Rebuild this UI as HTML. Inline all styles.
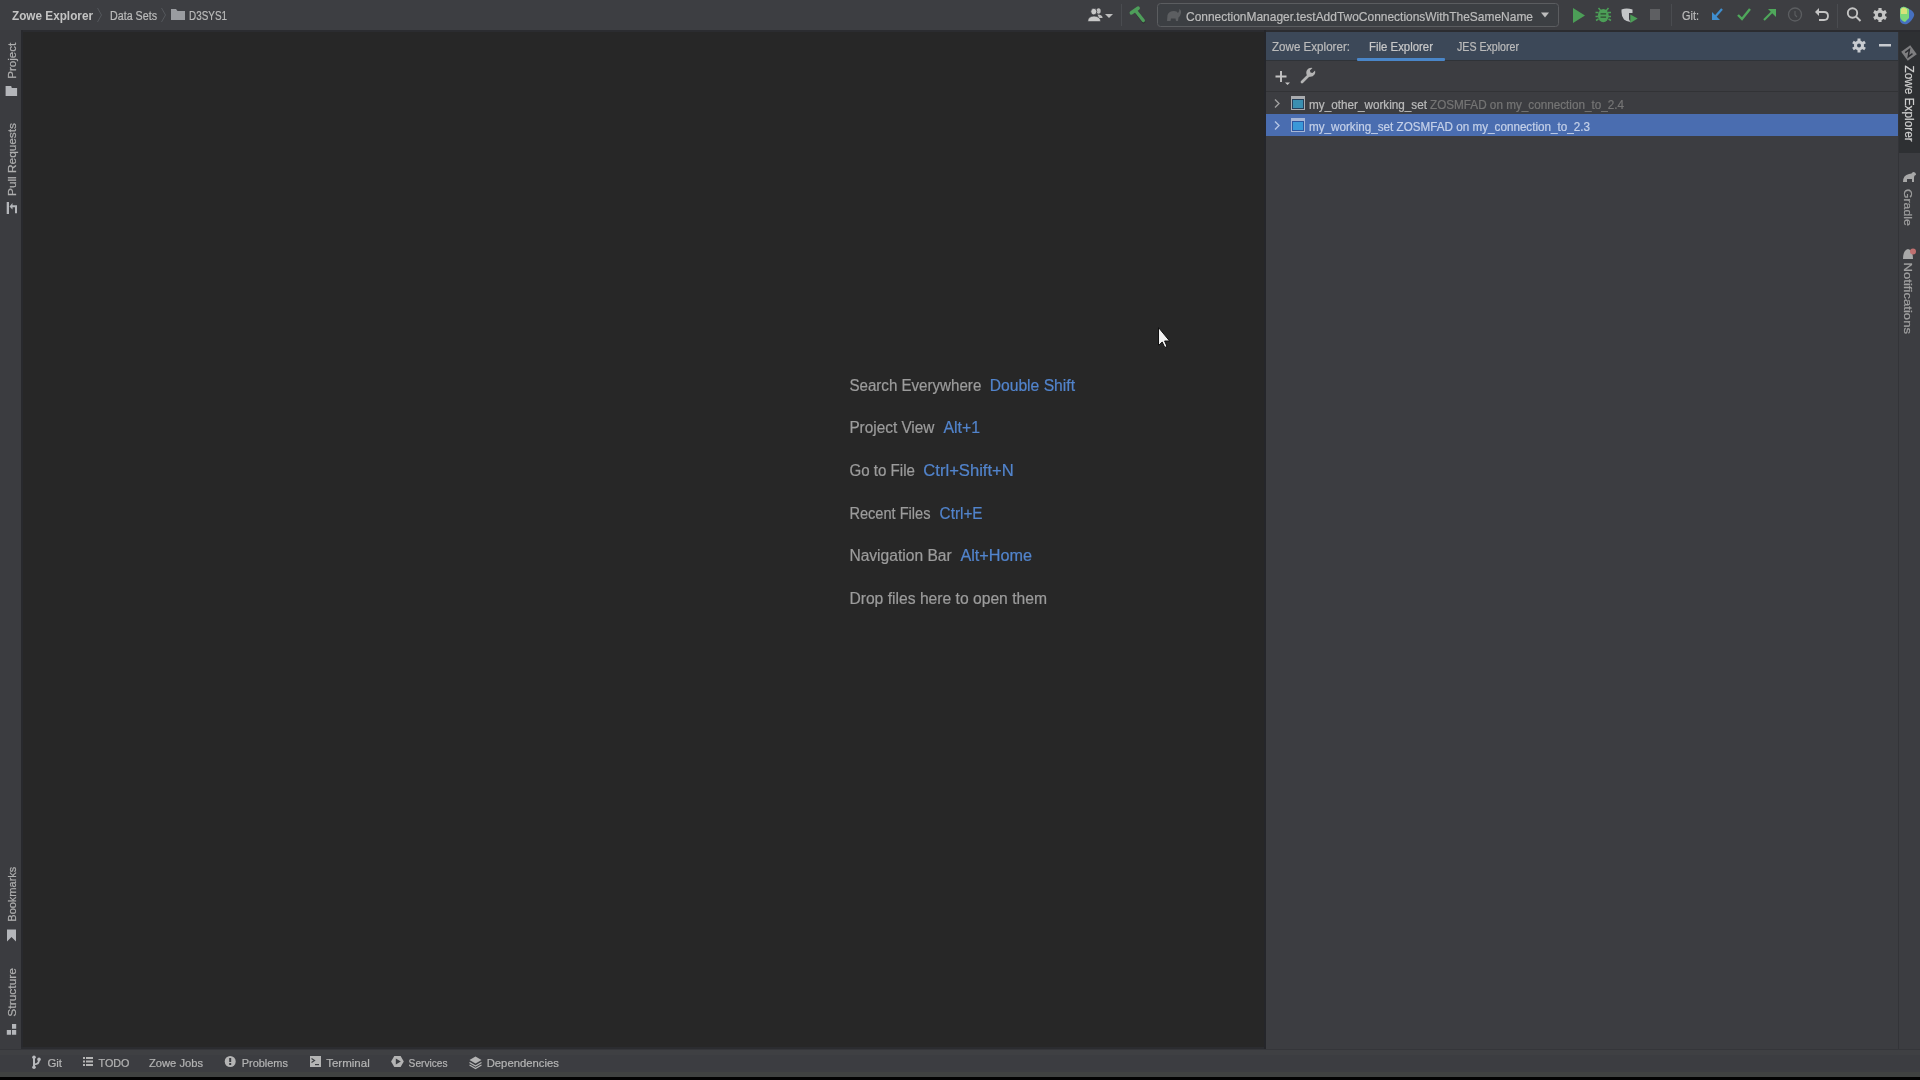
<!DOCTYPE html>
<html><head><meta charset="utf-8">
<style>
*{margin:0;padding:0;box-sizing:border-box}
html,body{width:1920px;height:1080px;overflow:hidden;background:#000;font-family:"Liberation Sans",sans-serif;color:#bbbbbb}
.abs{position:absolute}
#top{left:0;top:0;width:1920px;height:30px;background:#3d3e42}
#topline{left:21px;top:30px;width:1899px;height:2px;background:#2b2c30}
#lstripe{left:0;top:30px;width:21px;height:1019px;background:#3b3c40}
#lborder{left:21px;top:30px;width:2px;height:1019px;background:#28292d}
#editor{left:23px;top:32px;width:1241px;height:1015px;background:#272727}
#edbottom{left:21px;top:1047px;width:1245px;height:2px;background:#2b2c30}
#edborder{left:1264px;top:30px;width:2px;height:1019px;background:#25262a}
#panel{left:1266px;top:32px;width:632px;height:1017px;background:#3c3d41}
#rstripe{left:1898px;top:30px;width:22px;height:1019px;background:#3c3d41;border-left:1px solid #333438}
#status{left:0;top:1049px;width:1920px;height:28px;background:#3c3d41;border-top:1px solid #35363a}
#status2{left:0;top:1050px;width:1920px;height:5px;background:#3f4043}
#status3{left:0;top:1072px;width:1920px;height:5px;background:#404241}
#bottomblack{left:0;top:1077px;width:1920px;height:3px;background:#030303}
svg{position:absolute;left:0;top:0;will-change:transform}
text{font-family:"Liberation Sans",sans-serif}
</style></head><body>
<div id="top" class="abs"></div>
<div id="lstripe" class="abs"></div>
<div id="editor" class="abs"></div>
<div id="panel" class="abs"></div>
<div id="rstripe" class="abs"></div>
<div id="topline" class="abs"></div>
<div id="lborder" class="abs"></div>
<div id="edbottom" class="abs"></div>
<div id="edborder" class="abs"></div>
<div id="status" class="abs"></div>
<div id="status2" class="abs"></div>
<div id="status3" class="abs"></div>
<div id="bottomblack" class="abs"></div>

<svg width="1920" height="1080" viewBox="0 0 1920 1080">
<!-- ===== TOP BAR ===== -->
<g fill="#bbbbbb" font-size="12.5">
  <text x="12" y="20" font-weight="bold" textLength="81" lengthAdjust="spacingAndGlyphs" fill="#c4c4c4">Zowe Explorer</text>
  <text x="110" y="20" textLength="47" lengthAdjust="spacingAndGlyphs" stroke="#bbbbbb" stroke-width="0.22">Data Sets</text>
  <text x="189" y="20" textLength="38" lengthAdjust="spacingAndGlyphs" stroke="#bbbbbb" stroke-width="0.22">D3SYS1</text>
</g>
<g stroke="#55585c" stroke-width="1" fill="none">
  <path d="M97.5 8 L101.5 15 L97.5 22"/>
  <path d="M161.5 8 L165.5 15 L161.5 22"/>
</g>
<path d="M171 9 h5 l1.5 2 h7.5 v9 h-14 z" fill="#9a9ca0"/>

<!-- right toolbar -->
<g fill="#bdbdbd">
  <!-- user icon -->
  <ellipse cx="1098.6" cy="11" rx="2.1" ry="2.8" fill="#bdbdbd"/>
  <path d="M1097.5 14.6 Q1102.6 14.8 1102.6 18 L1099 18 z" fill="#bdbdbd"/>
  <ellipse cx="1093.8" cy="11.6" rx="3" ry="3.3" fill="#c8c8c8" stroke="#3d3e42" stroke-width="0.8"/>
  <path d="M1087.8 21.6 Q1087.8 16.4 1094 16.1 Q1100.6 16.4 1100.6 21.6z" fill="#c8c8c8" stroke="#3d3e42" stroke-width="0.6"/>
  <path d="M1105 14 h8 l-4 4 z"/>
</g>
<rect x="1121" y="4" width="1" height="22" fill="#4a4c50"/>
<!-- hammer -->
<path d="M1137 13.5 L1144.5 23" stroke="#2a2b2d" stroke-width="3" opacity="0.6"/>
<path d="M1131.5 12.8 L1138 8.2" stroke="#4e9e5a" stroke-width="3.8" stroke-linecap="round"/>
<path d="M1135.8 11 L1143.3 20.6" stroke="#4e9e5a" stroke-width="3.3" stroke-linecap="round"/>
<!-- combo -->
<rect x="1157.5" y="3.5" width="401" height="23" rx="3" fill="#3c3f43" stroke="#5b5d60"/>
<path d="M1167 21 L1167.5 15 Q1169 11 1174 11 Q1177 11 1178 13 Q1179.8 11.5 1179.2 9 Q1181.5 10 1181 13 Q1180.5 16 1178.5 17.5 L1178 21 L1176 21 L1175.5 18.5 L1171 18.5 L1170.5 21 Z" fill="#5c5e61"/>
<text x="1186" y="20.5" font-size="12.9" fill="#bcbcbc" textLength="347" lengthAdjust="spacingAndGlyphs" stroke="#bcbcbc" stroke-width="0.22">ConnectionManager.testAddTwoConnectionsWithTheSameName</text>
<path d="M1541 12.5 h8 l-4 5 z" fill="#bdbdbd"/>
<!-- run -->
<path d="M1573 8 L1585 15.5 L1573 23 z" fill="#4c9e57"/>
<!-- debug -->
<g stroke="#4c9e57" stroke-width="1.5" fill="none">
  <path d="M1598.5 8 l2.5 3 M1608.5 8 l-2.5 3 M1595.5 12.5 h3 M1608 12.5 h3 M1595.5 16.5 h3 M1608 16.5 h3 M1596 20.5 l2.5-1.5 M1611 20.5 l-2.5-1.5"/>
</g>
<ellipse cx="1603.3" cy="15.6" rx="5.4" ry="6.6" fill="#4c9e57"/>
<path d="M1600.5 13.8 h5.6 M1600.5 17.2 h5.6" stroke="#2e4a33" stroke-width="1.3"/>
<!-- coverage -->
<path d="M1621.5 9.5 Q1626.5 7.6 1632.5 9.5 L1632.5 13 L1629 13 L1629 19.2 Q1629.4 21 1631 21.6 Q1627 22.2 1624 19.6 Q1621.5 16.8 1621.5 12 Z" fill="#c4c6c8"/>
<path d="M1630.3 14.5 L1637.7 18.6 L1630.3 23 Z" fill="#4c9e57"/>
<!-- stop -->
<rect x="1650" y="9" width="10" height="11" fill="#5e5f62"/>
<rect x="1671" y="4" width="1" height="22" fill="#4a4c50"/>
<text x="1682" y="20" font-size="12" fill="#bbbbbb" textLength="17" lengthAdjust="spacingAndGlyphs" stroke="#bbbbbb" stroke-width="0.22">Git:</text>
<!-- update arrow (blue, down-left) -->
<g stroke="#3f8ed0" stroke-width="2.2" fill="none">
  <path d="M1722 9 L1714 18"/>
</g>
<path d="M1712 12 v8 h8 z" fill="#3f8ed0"/>
<!-- commit check -->
<path d="M1738 15 l4 4 l8-10" stroke="#4fa85b" stroke-width="2.4" fill="none"/>
<!-- push arrow -->
<path d="M1764 20 L1774 10" stroke="#4fa85b" stroke-width="2.2" fill="none"/>
<path d="M1768 9 h8 v8 z" fill="#4fa85b"/>
<!-- history -->
<circle cx="1795" cy="14.5" r="6.5" stroke="#5c5e61" stroke-width="1.3" fill="none"/>
<path d="M1795 11 v4 l2 2" stroke="#5c5e61" stroke-width="1.1" fill="none"/>
<!-- rollback -->
<path d="M1818 12 h6 q4 0 4 4 q0 4-4 4 h-5" stroke="#c4c4c4" stroke-width="1.8" fill="none"/>
<path d="M1815 12 l4-4 v8 z" fill="#c4c4c4"/>
<rect x="1837" y="4" width="1" height="24" fill="#4a4c50"/>
<!-- search -->
<circle cx="1852.5" cy="13" r="4.7" stroke="#c4c4c4" stroke-width="1.9" fill="none"/>
<path d="M1856 16.5 L1860.5 21" stroke="#c4c4c4" stroke-width="2" fill="none"/>
<!-- gear -->
<g transform="translate(1880,15)">
  <circle r="5.2" fill="#c4c4c4"/>
  <g fill="#c4c4c4">
    <rect x="-1.6" y="-7" width="3.2" height="14"/>
    <rect x="-1.6" y="-7" width="3.2" height="14" transform="rotate(60)"/>
    <rect x="-1.6" y="-7" width="3.2" height="14" transform="rotate(120)"/>
  </g>
  <circle r="2.2" fill="#3c3f43"/>
</g>
<!-- toolbox -->
<path d="M1900 9 q2-3 5-2 l6 3 q4 3 3 6 q-2 5-7 8 q-5 1-7-3 z" fill="#4670c0"/>
<path d="M1900 9 q2-3 5-2 l4 2 v9 l-4 4 q-5-2-5-6 z" fill="#7fd87a"/>
<path d="M1901 9 q2-2 4-1 l2 1 v5 h-6 z" fill="#d7e27a"/>

<!-- ===== LEFT STRIPE ===== -->
<g fill="#afafaf" font-size="11.5">
  <text transform="translate(15.6,78.7) rotate(-90)" textLength="36" lengthAdjust="spacingAndGlyphs" stroke="#afafaf" stroke-width="0.22">Project</text>
  <text transform="translate(15.6,196) rotate(-90)" textLength="73" lengthAdjust="spacingAndGlyphs" stroke="#afafaf" stroke-width="0.22">Pull Requests</text>
  <text transform="translate(15.6,921.7) rotate(-90)" textLength="55" lengthAdjust="spacingAndGlyphs" stroke="#afafaf" stroke-width="0.22">Bookmarks</text>
  <text transform="translate(15.6,1016.7) rotate(-90)" textLength="48.7" lengthAdjust="spacingAndGlyphs" stroke="#afafaf" stroke-width="0.22">Structure</text>
</g>
<g fill="#b4b6ba">
  <path d="M5.6 86 h5.6 l0.6 2 h5.3 v8 h-11.5 z"/>
  <path d="M6.7 202 h2.3 v12 h-2.3z M9.5 206.5 l3-3.5 v2.3 h4.5 v8 h-2 v-6 h-2.5 v2.3z"/>
  <path d="M7 929.5 h9 v12 l-4.5-4.5 l-4.5 4.5 z"/>
  <path d="M12 1024 h4.2 v4.8 h-4.2z M12 1030 h4.2 v4.8 h-4.2z M6.8 1030 h4.3 v4.8 h-4.3z"/>
</g>

<!-- ===== WELCOME ===== -->
<g font-size="16" fill="#9c9c9c">
  <text x="849.4" y="390.8" textLength="131.9" lengthAdjust="spacingAndGlyphs" stroke="#9c9c9c" stroke-width="0.22">Search Everywhere</text>
  <text x="849.4" y="433.2" textLength="85" lengthAdjust="spacingAndGlyphs" stroke="#9c9c9c" stroke-width="0.22">Project View</text>
  <text x="849.4" y="475.8" textLength="65.5" lengthAdjust="spacingAndGlyphs" stroke="#9c9c9c" stroke-width="0.22">Go to File</text>
  <text x="849.4" y="518.5" textLength="81.1" lengthAdjust="spacingAndGlyphs" stroke="#9c9c9c" stroke-width="0.22">Recent Files</text>
  <text x="849.4" y="560.8" textLength="102.3" lengthAdjust="spacingAndGlyphs" stroke="#9c9c9c" stroke-width="0.22">Navigation Bar</text>
  <text x="849.4" y="603.5" textLength="197.6" lengthAdjust="spacingAndGlyphs" stroke="#9c9c9c" stroke-width="0.22">Drop files here to open them</text>
</g>
<g font-size="16" fill="#5284cc">
  <text x="989.7" y="390.8" textLength="85.3" lengthAdjust="spacingAndGlyphs" stroke="#5284cc" stroke-width="0.22">Double Shift</text>
  <text x="943.5" y="433.2" textLength="36.5" lengthAdjust="spacingAndGlyphs" stroke="#5284cc" stroke-width="0.22">Alt+1</text>
  <text x="923.3" y="475.8" textLength="90.5" lengthAdjust="spacingAndGlyphs" stroke="#5284cc" stroke-width="0.22">Ctrl+Shift+N</text>
  <text x="939.6" y="518.5" textLength="43" lengthAdjust="spacingAndGlyphs" stroke="#5284cc" stroke-width="0.22">Ctrl+E</text>
  <text x="960.4" y="560.8" textLength="71.6" lengthAdjust="spacingAndGlyphs" stroke="#5284cc" stroke-width="0.22">Alt+Home</text>
</g>
<!-- cursor -->
<path d="M1158.5 327.5 L1158.5 345.5 L1162.2 342 L1164.8 347.5 L1167 346.5 L1164.6 341 L1169.6 341 Z" fill="#f2f2f2" stroke="#111" stroke-width="1"/>

<!-- ===== TOOL WINDOW ===== -->
<rect x="1266" y="32" width="632" height="28" fill="#3c4858"/>
<rect x="1266" y="60" width="632" height="1" fill="#2f3338"/>
<g font-size="12.3" fill="#bbbbbb">
  <text x="1272" y="51" textLength="78" lengthAdjust="spacingAndGlyphs" stroke="#bbbbbb" stroke-width="0.22">Zowe Explorer:</text>
  <text x="1369" y="51" textLength="64" lengthAdjust="spacingAndGlyphs" fill="#c8c8c8" stroke="#c8c8c8" stroke-width="0.22">File Explorer</text>
  <text x="1457" y="51" textLength="62" lengthAdjust="spacingAndGlyphs" stroke="#bbbbbb" stroke-width="0.22">JES Explorer</text>
</g>
<rect x="1357" y="58" width="88" height="3" rx="1" fill="#4a86c8"/>
<!-- header gear -->
<g transform="translate(1859,45.5)">
  <circle r="5" fill="#c8cbd0"/>
  <g fill="#c8cbd0">
    <rect x="-1.5" y="-7" width="3" height="14"/>
    <rect x="-1.5" y="-7" width="3" height="14" transform="rotate(60)"/>
    <rect x="-1.5" y="-7" width="3" height="14" transform="rotate(120)"/>
  </g>
  <circle r="2" fill="#3b4858"/>
</g>
<rect x="1879" y="44" width="12" height="2.5" fill="#c8cbd0"/>
<!-- toolbar -->
<rect x="1266" y="91" width="632" height="1" fill="#323336"/>
<path d="M1281 71 v11 M1275.5 76.5 h11" stroke="#c4c4c4" stroke-width="1.9"/>
<path d="M1285 82.5 h5 l-2.5 2.5z" fill="#c4c4c4"/>
<path d="M1302 82 L1309 75" stroke="#b4b4b4" stroke-width="2.8" stroke-linecap="round"/><path d="M1306.5 74.5 q-1-4 2-6 q2-1 4-0.6 l-2.6 2.6 l0.6 2 l2 0.6 l2.6-2.6 q0.5 2-0.6 4 q-2 3-6 2z" fill="#b4b4b4"/>
<!-- rows -->
<rect x="1266" y="114" width="632" height="22" fill="#4a6db0"/>
<g stroke="#a0a0a0" stroke-width="1.4" fill="none">
  <path d="M1275 99.5 l4 4 l-4 4"/>
</g>
<g stroke="#b4c4e4" stroke-width="1.4" fill="none">
  <path d="M1275 121.5 l4 4 l-4 4"/>
</g>
<rect x="1291" y="96" width="14" height="14" fill="#a9abae"/>
<rect x="1292" y="99" width="12" height="10" fill="#25405a"/>
<rect x="1293" y="100" width="10" height="8" fill="#3a8fb0"/>
<rect x="1291" y="118" width="14" height="14" fill="#a6b6d6"/>
<rect x="1292" y="121" width="12" height="10" fill="#2d56a0"/>
<rect x="1293" y="122" width="10" height="8" fill="#3a98d8"/>
<g font-size="12.2">
  <text x="1309" y="108.5" fill="#bbbbbb" textLength="118" lengthAdjust="spacingAndGlyphs" stroke="#bbbbbb" stroke-width="0.22">my_other_working_set</text>
  <text x="1430" y="108.5" fill="#757575" textLength="194" lengthAdjust="spacingAndGlyphs" stroke="#757575" stroke-width="0.22">ZOSMFAD on my_connection_to_2.4</text>
  <text x="1309" y="130.5" fill="#c4d0e8" textLength="281" lengthAdjust="spacingAndGlyphs" stroke="#c4d0e8" stroke-width="0.22">my_working_set ZOSMFAD on my_connection_to_2.3</text>
</g>

<!-- ===== RIGHT STRIPE ===== -->
<rect x="1899" y="32" width="21" height="121" fill="#2e3033"/>
<g transform="translate(1909,53) rotate(-36)">
  <rect x="-5.6" y="-5.6" width="11.2" height="11.2" fill="#7e7e80"/>
</g>
<g transform="translate(1909,53) rotate(-36)">
  <path d="M-2.8 -2.6 h5.2 l-5.2 5.2 h5.2" stroke="#2b2c30" stroke-width="1.5" fill="none"/>
</g>
<text transform="translate(1904.5,65.4) rotate(90)" font-size="12" fill="#d0d0d0" textLength="76.4" lengthAdjust="spacingAndGlyphs" stroke="#d0d0d0" stroke-width="0.22">Zowe Explorer</text>
<path d="M1903 182 q0-7 6-8 q3 0 4 -2 q3 0 3 3 q-2 0-2 3 v4 h-2 v-3 h-5 v3z" fill="#a8a8a8"/>
<text transform="translate(1904,189) rotate(90)" font-size="11.5" fill="#a0a0a0" textLength="36.8" lengthAdjust="spacingAndGlyphs" stroke="#a0a0a0" stroke-width="0.22">Gradle</text>
<path d="M1903 259 q0-9 5-10 q5 1 5 10 z" fill="#a8a8a8"/>
<circle cx="1913" cy="251.5" r="3" fill="#c07070"/>
<text transform="translate(1904,262.5) rotate(90)" font-size="11.5" fill="#a0a0a0" textLength="71.5" lengthAdjust="spacingAndGlyphs" stroke="#a0a0a0" stroke-width="0.22">Notifications</text>

<!-- ===== STATUS BAR ===== -->
<g font-size="11.6" fill="#b4b4b4">
  <text x="47.4" y="1067" textLength="14.6" lengthAdjust="spacingAndGlyphs" stroke="#b4b4b4" stroke-width="0.22">Git</text>
  <text x="98.5" y="1067" textLength="30.9" lengthAdjust="spacingAndGlyphs" stroke="#b4b4b4" stroke-width="0.22">TODO</text>
  <text x="149" y="1067" textLength="54" lengthAdjust="spacingAndGlyphs" stroke="#b4b4b4" stroke-width="0.22">Zowe Jobs</text>
  <text x="241.7" y="1067" textLength="46.3" lengthAdjust="spacingAndGlyphs" stroke="#b4b4b4" stroke-width="0.22">Problems</text>
  <text x="326.2" y="1067" textLength="43.5" lengthAdjust="spacingAndGlyphs" stroke="#b4b4b4" stroke-width="0.22">Terminal</text>
  <text x="408.6" y="1067" textLength="39" lengthAdjust="spacingAndGlyphs" stroke="#b4b4b4" stroke-width="0.22">Services</text>
  <text x="486.7" y="1067" textLength="72.2" lengthAdjust="spacingAndGlyphs" stroke="#b4b4b4" stroke-width="0.22">Dependencies</text>
</g>
<g fill="#b4b4b4">
  <!-- git icon -->
  <path d="M34 1057.5 v9.5" stroke="#b8babd" stroke-width="2" fill="none"/>
  <circle cx="34" cy="1057.3" r="1.8" fill="#b8babd"/>
  <circle cx="34" cy="1067.2" r="1.8" fill="#b8babd"/>
  <circle cx="39" cy="1059.4" r="1.8" fill="#b8babd"/>
  <path d="M39 1060 Q39 1064.3 34.5 1064.3" stroke="#b8babd" stroke-width="1.8" fill="none"/>
  <!-- todo icon -->
  <path d="M83 1057 h2 v2 h-2z M86 1057 h7 v2 h-7z M83 1060.5 h2 v2 h-2z M86 1060.5 h7 v2 h-7z M83 1064 h2 v2 h-2z M86 1064 h7 v2 h-7z"/>
  <!-- problems -->
  <circle cx="230.2" cy="1061.5" r="5.5"/>
  <!-- terminal -->
  <rect x="310" y="1056" width="11" height="11"/>
  <!-- services -->
  <path d="M394.3 1056 h6.3 l3.2 5.5 l-3.2 5.5 h-6.3 l-3.2-5.5z"/>
  <!-- deps -->
  <path d="M469.5 1060 l6-3.5 l6 3.5 l-6 3.5z"/>
  <path d="M469.5 1062.5 l6 3.5 l6-3.5 M469.5 1065 l6 3.5 l6-3.5" stroke="#b4b4b4" stroke-width="1.2" fill="none"/>
</g>
<g fill="#3c3e42">
  <rect x="229.2" y="1058" width="2" height="4"/>
  <rect x="229.2" y="1063" width="2" height="2"/>
  <path d="M311.5 1058.5 l3 2 l-3 2" stroke="#3c3e42" stroke-width="1.2" fill="none"/>
  <rect x="315" y="1064" width="4" height="1.2"/>
  <path d="M395.8 1058.5 l5 3 l-5 3z"/>
</g>
</svg>
</body></html>
